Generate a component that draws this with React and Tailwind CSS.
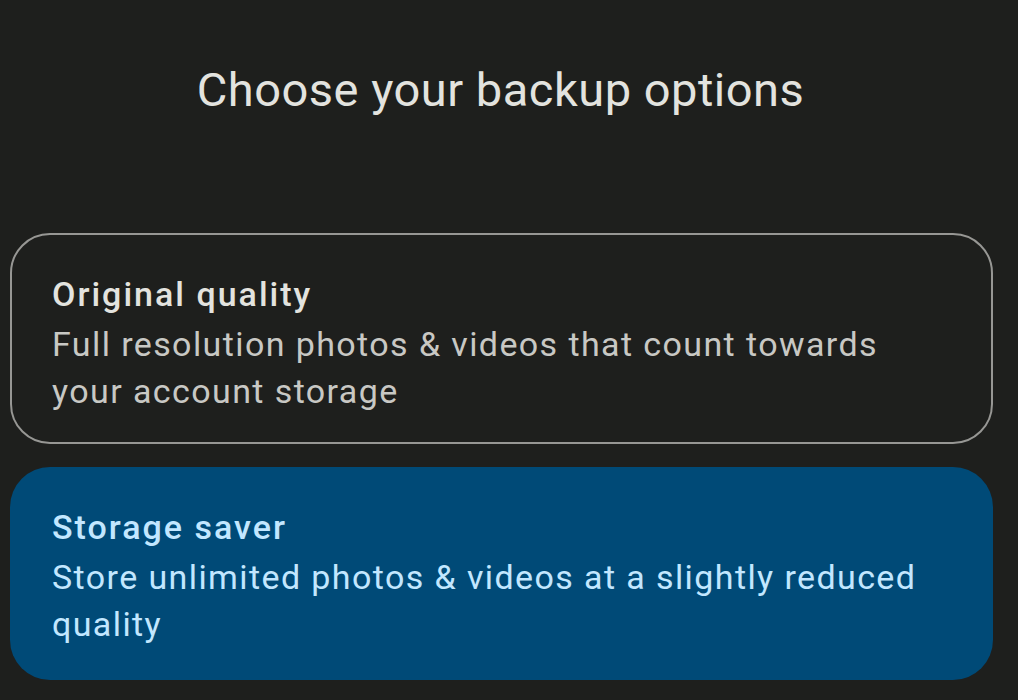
export default function App() {
  return (
    <div
      className="w-[1018px] h-[700px] overflow-hidden bg-[#1e1f1d] px-[10px]"
      style={{ fontFamily: "Roboto, 'Noto Sans', sans-serif" }}
    >
      <h1 className="pt-[60px] pr-[17px] text-center text-[47px] leading-[60px] tracking-[0.5px] text-[#e3e3df] font-normal">
        Choose your backup options
      </h1>

      <div className="mt-[113px] flex flex-col gap-[23px] w-[983px]">
        <div className="h-[211px] rounded-[40px] border-2 border-[#979794] px-[40px] pt-[33px]">
          <p className="text-[34px] leading-[53px] tracking-[2px] font-medium text-[#e3e3df]">
            Original quality
          </p>
          <p className="text-[34px] leading-[47px] tracking-[1.4px] text-[#c8c8c4]">
            Full resolution photos &amp; videos that count towards
            <br />
            your account storage
          </p>
        </div>

        <div className="h-[213px] rounded-[40px] bg-[#004a77] px-[42px] pt-[34px]">
          <p className="text-[34px] leading-[53px] tracking-[2px] font-medium text-[#c2e7ff]">
            Storage saver
          </p>
          <p className="text-[34px] leading-[47px] tracking-[1.4px] text-[#c2e7ff]">
            Store unlimited photos &amp; videos at a slightly reduced
            <br />
            quality
          </p>
        </div>
      </div>
    </div>
  );
}
